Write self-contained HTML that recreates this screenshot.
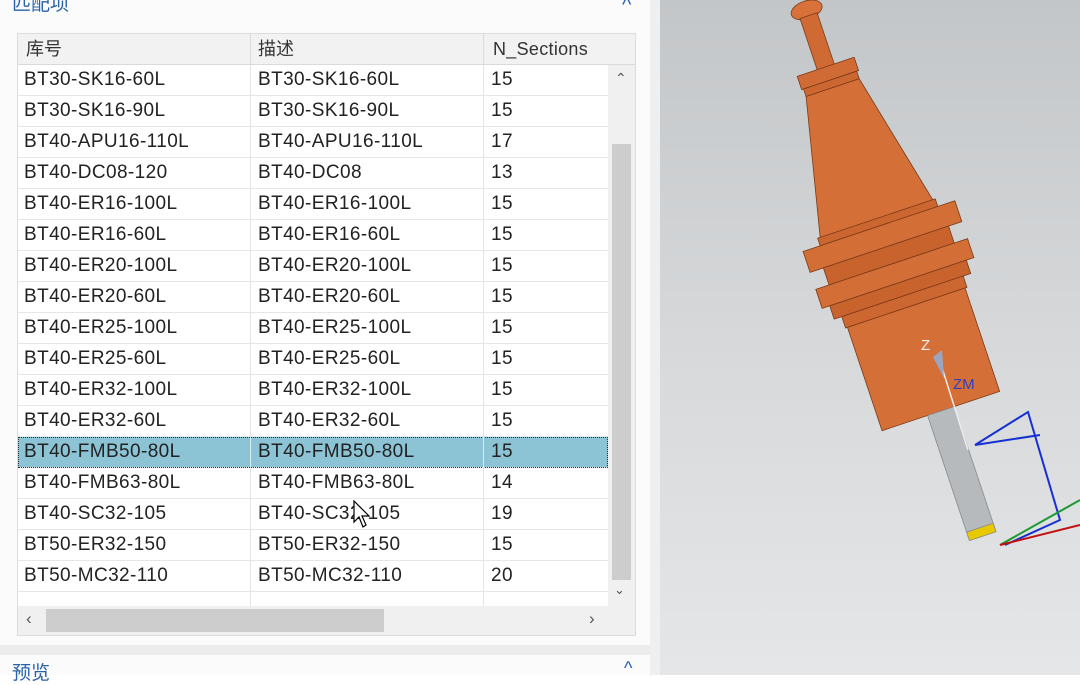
<!DOCTYPE html>
<html><head><meta charset="utf-8"><style>
*{margin:0;padding:0;box-sizing:border-box}
body{width:1080px;height:675px;overflow:hidden;position:relative;background:#fff;font-family:"Liberation Sans","Noto Sans CJK SC",sans-serif}
#panel{position:absolute;left:0;top:0;width:650px;height:675px;background:#fbfbfb}
#strip{position:absolute;left:650px;top:0;width:10px;height:675px;background:#eeeff0}
#view{position:absolute;left:660px;top:0;width:420px;height:675px;background:linear-gradient(#c3c6c8,#d6d8da 50%,#e5e6e8)}
.title{position:absolute;left:12px;color:#2a62a8;font-size:19px}
#table{position:absolute;left:17px;top:33px;width:619px;height:603px;border:1px solid #dcdcdc;background:#fff;overflow:hidden}
.hdr{position:absolute;left:0;top:0;width:617px;height:31px;background:#f2f2f2;border-bottom:1px solid #dadada;font-size:18px;color:#333}
.row{position:absolute;left:0;width:590px;height:31px;border-bottom:1px solid #e6e6e6;font-size:19px;letter-spacing:0.4px;color:#222}
.c{position:absolute;top:0;line-height:30px;white-space:nowrap}
.c1{left:6px}.c2{left:240px}.c3{left:473px}
.vl{position:absolute;top:0;width:1px;height:572px;background:#e4e4e4}
.sel{background:#8cc4d5;outline:1px dotted #333;outline-offset:-1px}
</style></head><body>
<div id="panel">
<div class="title" style="top:-11px">匹配项</div>
<div style="position:absolute;left:622px;top:-6px;font-size:20px;color:#2a62a8">^</div>
<div id="table">
<div class="vl" style="left:232px"></div><div class="vl" style="left:465px"></div>
<div class="hdr"><span class="c c1" style="left:8px">库号</span><span class="c c2">描述</span><span class="c c3" style="left:475px;letter-spacing:0.3px">N_Sections</span>
<div style="position:absolute;left:232px;top:0;width:1px;height:31px;background:#dadada"></div><div style="position:absolute;left:465px;top:0;width:1px;height:31px;background:#dadada"></div></div>
<div class="row" style="top:31px"><span class="c c1">BT30-SK16-60L</span><span class="c c2">BT30-SK16-60L</span><span class="c c3">15</span></div>
<div class="row" style="top:62px"><span class="c c1">BT30-SK16-90L</span><span class="c c2">BT30-SK16-90L</span><span class="c c3">15</span></div>
<div class="row" style="top:93px"><span class="c c1">BT40-APU16-110L</span><span class="c c2">BT40-APU16-110L</span><span class="c c3">17</span></div>
<div class="row" style="top:124px"><span class="c c1">BT40-DC08-120</span><span class="c c2">BT40-DC08</span><span class="c c3">13</span></div>
<div class="row" style="top:155px"><span class="c c1">BT40-ER16-100L</span><span class="c c2">BT40-ER16-100L</span><span class="c c3">15</span></div>
<div class="row" style="top:186px"><span class="c c1">BT40-ER16-60L</span><span class="c c2">BT40-ER16-60L</span><span class="c c3">15</span></div>
<div class="row" style="top:217px"><span class="c c1">BT40-ER20-100L</span><span class="c c2">BT40-ER20-100L</span><span class="c c3">15</span></div>
<div class="row" style="top:248px"><span class="c c1">BT40-ER20-60L</span><span class="c c2">BT40-ER20-60L</span><span class="c c3">15</span></div>
<div class="row" style="top:279px"><span class="c c1">BT40-ER25-100L</span><span class="c c2">BT40-ER25-100L</span><span class="c c3">15</span></div>
<div class="row" style="top:310px"><span class="c c1">BT40-ER25-60L</span><span class="c c2">BT40-ER25-60L</span><span class="c c3">15</span></div>
<div class="row" style="top:341px"><span class="c c1">BT40-ER32-100L</span><span class="c c2">BT40-ER32-100L</span><span class="c c3">15</span></div>
<div class="row" style="top:372px"><span class="c c1">BT40-ER32-60L</span><span class="c c2">BT40-ER32-60L</span><span class="c c3">15</span></div>
<div class="row sel" style="top:403px"><span class="c c1">BT40-FMB50-80L</span><span class="c c2">BT40-FMB50-80L</span><span class="c c3">15</span>
<div style="position:absolute;left:232px;top:0;width:1px;height:31px;background:#d8eef4"></div><div style="position:absolute;left:465px;top:0;width:1px;height:31px;background:#d8eef4"></div></div>
<div class="row" style="top:434px"><span class="c c1">BT40-FMB63-80L</span><span class="c c2">BT40-FMB63-80L</span><span class="c c3">14</span></div>
<div class="row" style="top:465px"><span class="c c1">BT40-SC32-105</span><span class="c c2">BT40-SC32-105</span><span class="c c3">19</span></div>
<div class="row" style="top:496px"><span class="c c1">BT50-ER32-150</span><span class="c c2">BT50-ER32-150</span><span class="c c3">15</span></div>
<div class="row" style="top:527px"><span class="c c1">BT50-MC32-110</span><span class="c c2">BT50-MC32-110</span><span class="c c3">20</span></div>
<div style="position:absolute;left:590px;top:31px;width:27px;height:541px;background:#f0f0f0"></div>
<div style="position:absolute;left:594px;top:110px;width:19px;height:436px;background:#cdcdcd"></div>
<div style="position:absolute;left:597px;top:36px;font-size:14px;color:#555">&#8963;</div>
<div style="position:absolute;left:596px;top:548px;font-size:13px;color:#555">&#8964;</div>
<div style="position:absolute;left:0;top:572px;width:617px;height:29px;background:#f0f0f0"></div>
<div style="position:absolute;left:28px;top:575px;width:338px;height:23px;background:#cdcdcd"></div>
<div style="position:absolute;left:8px;top:575px;font-size:17px;color:#555">&#8249;</div>
<div style="position:absolute;left:571px;top:575px;font-size:17px;color:#555">&#8250;</div>
</div>
<div style="position:absolute;left:0;top:645px;width:650px;height:10px;background:#ececec"></div>
<div class="title" style="top:658px">预览</div>
<div style="position:absolute;left:624px;top:658px;font-size:18px;color:#2a62a8">^</div>
<svg style="position:absolute;left:352px;top:500px" width="20" height="30" viewBox="0 0 20 30"><path d="M2 1 L2 22 L7 17 L11 27 L14 25 L10 16 L17 16 Z" fill="#fff" stroke="#000" stroke-width="1.2"/></svg>
</div>
<div id="strip"></div>
<div id="view"></div>
<svg style="position:absolute;left:0;top:0" width="1080" height="675">
<g transform="translate(806,8) rotate(-18.5)" stroke="#7a3a18" stroke-width="0.8">
<ellipse cx="0" cy="2" rx="16" ry="9" fill="#d8723a"/>
<rect x="-9" y="8" width="18" height="55" fill="#cf6a34"/>
<rect x="-30" y="62" width="60" height="14" fill="#d06b35"/>
<rect x="-28" y="76" width="56" height="8" fill="#cc6731"/>
<polygon points="-28,84 28,84 60,225 -60,225" fill="#d46f38"/>
<rect x="-62" y="222" width="124" height="8" fill="#cb6630"/>
<rect x="-80" y="230" width="160" height="22" fill="#d36e37"/>
<rect x="-66" y="252" width="132" height="18" fill="#c8632e"/>
<rect x="-80" y="270" width="160" height="20" fill="#d36e37"/>
<rect x="-72" y="290" width="144" height="14" fill="#c8632e"/>
<rect x="-64" y="304" width="128" height="12" fill="#cc6731"/>
<polygon points="-62,316 62,316 62,425 -62,425" fill="#d46f38"/>
<rect x="-14" y="425" width="28" height="130" fill="#b7babd" stroke="#888"/>
<rect x="-14" y="548" width="28" height="9" fill="#e8c800" stroke="#888"/>
</g>
<line x1="938" y1="355" x2="968" y2="450" stroke="#eee" stroke-width="1.5"/>
<polygon points="933,357 942,350 944,378" fill="#9aa6c0"/>
<text x="921" y="350" font-family="Liberation Sans" font-size="15" fill="#eee">Z</text>
<text x="953" y="389" font-family="Liberation Sans" font-size="15" fill="#3040c0">ZM</text>
<polyline points="975,445 1028,412 1060,520 1005,545" fill="none" stroke="#1530d0" stroke-width="2"/>
<line x1="975" y1="445" x2="1040" y2="435" stroke="#1530d0" stroke-width="2"/>
<line x1="1000" y1="545" x2="1080" y2="500" stroke="#1a9a30" stroke-width="2"/>
<line x1="1000" y1="545" x2="1080" y2="525" stroke="#c01010" stroke-width="2"/>
</svg>
</body></html>
